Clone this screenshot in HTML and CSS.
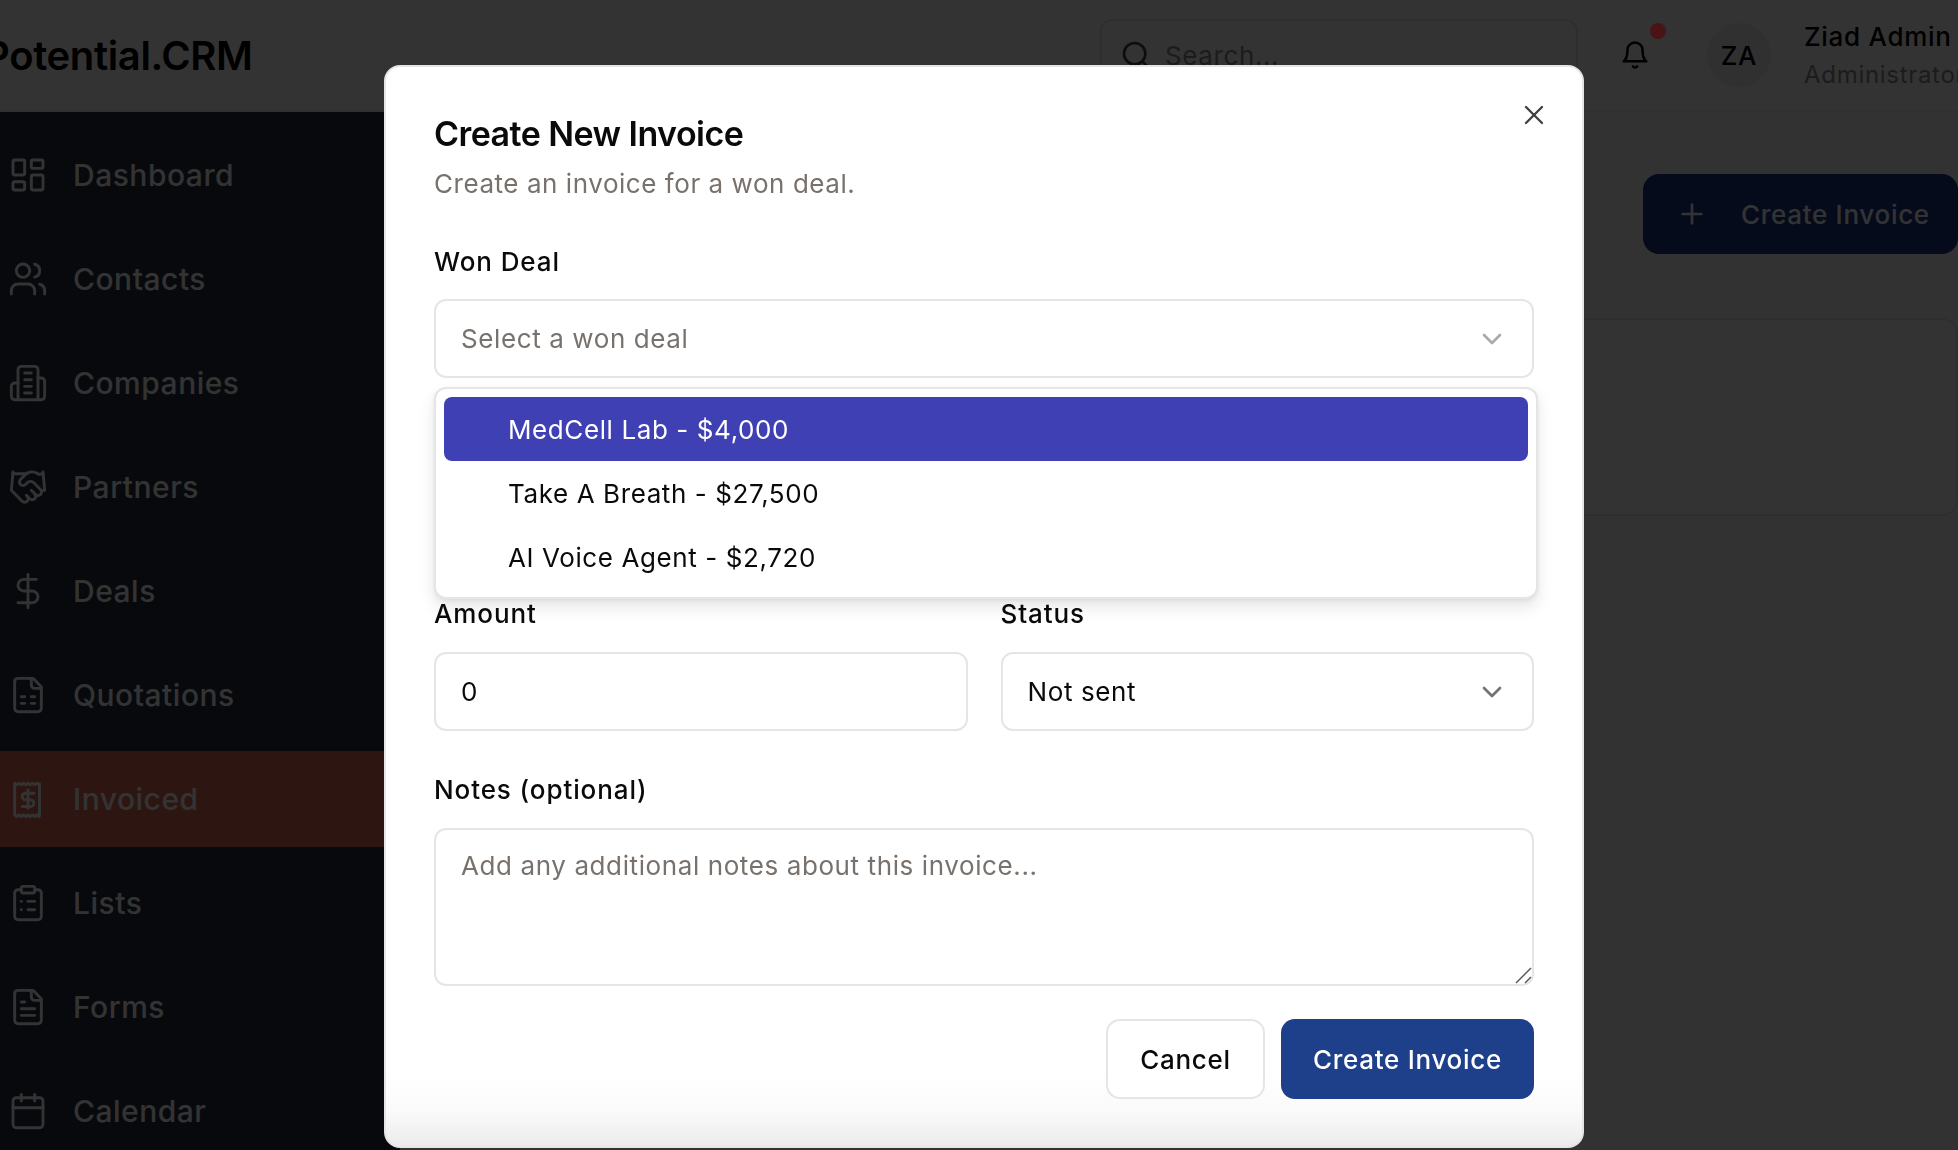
FILE: index.html
```html
<!DOCTYPE html>
<html lang="en">
<head>
  <meta charset="UTF-8" />
  <meta name="viewport" content="width=device-width, initial-scale=1" />
  <title>Potential.CRM - Invoiced</title>
  <link rel="stylesheet" href="styles.css">
</head>
<body>
  <header class="topbar">
    <div class="brand">Potential.CRM</div>
    <div class="topbar-right">
      <div class="search">
        <svg class="search-icon" viewBox="0 0 24 24"><circle cx="11" cy="11" r="8"/><path d="m21 21-4.3-4.3"/></svg>
        <span>Search...</span>
      </div>
      <div class="bell">
        <svg viewBox="0 0 24 24"><path d="M6 8a6 6 0 0 1 12 0c0 7 3 9 3 9H3s3-2 3-9"/><path d="M10.3 21a1.94 1.94 0 0 0 3.4 0"/></svg>
        <span class="bell-dot"></span>
      </div>
      <div class="avatar">ZA</div>
      <div class="user">
        <div class="user-name">Ziad Admin</div>
        <div class="user-role">Administrator</div>
      </div>
    </div>
  </header>

  <div class="layout">
    <nav class="sidebar">
      <a class="nav-item">
        <svg viewBox="0 0 24 24"><rect x="3" y="3" width="7" height="9" rx="1"/><rect x="14" y="3" width="7" height="5" rx="1"/><rect x="14" y="12" width="7" height="9" rx="1"/><rect x="3" y="16" width="7" height="5" rx="1"/></svg>
        Dashboard
      </a>
      <a class="nav-item">
        <svg viewBox="0 0 24 24"><path d="M16 21v-2a4 4 0 0 0-4-4H6a4 4 0 0 0-4 4v2"/><circle cx="9" cy="7" r="4"/><path d="M22 21v-2a4 4 0 0 0-3-3.87"/><path d="M16 3.13a4 4 0 0 1 0 7.75"/></svg>
        Contacts
      </a>
      <a class="nav-item">
        <svg viewBox="0 0 24 24"><path d="M6 22V4a2 2 0 0 1 2-2h8a2 2 0 0 1 2 2v18Z"/><path d="M6 12H4a2 2 0 0 0-2 2v6a2 2 0 0 0 2 2h2"/><path d="M18 9h2a2 2 0 0 1 2 2v9a2 2 0 0 1-2 2h-2"/><path d="M10 6h4"/><path d="M10 10h4"/><path d="M10 14h4"/><path d="M10 18h4"/></svg>
        Companies
      </a>
      <a class="nav-item">
        <svg viewBox="0 0 24 24"><path d="m11 17 2 2a1 1 0 1 0 3-3"/><path d="m14 14 2.5 2.5a1 1 0 1 0 3-3l-3.88-3.88a3 3 0 0 0-4.24 0l-.88.88a1 1 0 1 1-3-3l2.81-2.81a5.79 5.79 0 0 1 7.06-.87l.47.28a2 2 0 0 0 1.42.25L21 4"/><path d="m21 3 1 11h-2"/><path d="M3 3 2 14l6.5 6.5a1 1 0 1 0 3-3"/><path d="M3 4h8"/></svg>
        Partners
      </a>
      <a class="nav-item">
        <svg viewBox="0 0 24 24"><path d="M12 2v20"/><path d="M17 5H9.5a3.5 3.5 0 0 0 0 7h5a3.5 3.5 0 0 1 0 7H6"/></svg>
        Deals
      </a>
      <a class="nav-item">
        <svg viewBox="0 0 24 24"><path d="M15 2H6a2 2 0 0 0-2 2v16a2 2 0 0 0 2 2h12a2 2 0 0 0 2-2V7Z"/><path d="M14 2v4a2 2 0 0 0 2 2h4"/><path d="M8 13h2"/><path d="M14 13h2"/><path d="M8 17h2"/><path d="M14 17h2"/></svg>
        Quotations
      </a>
      <a class="nav-item active">
        <svg viewBox="0 0 24 24"><path d="M4 2.5l1.3 1 1.4-1 1.3 1 1.3-1 1.4 1 1.3-1 1.3 1 1.4-1 1.3 1 1.4-1 1.3 1 .2-.6v19l-.2.6-1.3-1-1.4 1-1.3-1-1.4 1-1.3-1-1.3 1-1.4-1-1.3 1-1.3-1-1.4 1L4 21.5Z"/><path d="M15.5 8.5h-5a2 2 0 0 0 0 4h3a2 2 0 0 1 0 4h-5"/><path d="M12 6.5v11"/></svg>
        Invoiced
      </a>
      <a class="nav-item">
        <svg viewBox="0 0 24 24"><rect x="8" y="2" width="8" height="4" rx="1"/><path d="M16 4h2a2 2 0 0 1 2 2v14a2 2 0 0 1-2 2H6a2 2 0 0 1-2-2V6a2 2 0 0 1 2-2h2"/><path d="M12 11h4"/><path d="M12 16h4"/><path d="M8 11h.01"/><path d="M8 16h.01"/></svg>
        Lists
      </a>
      <a class="nav-item">
        <svg viewBox="0 0 24 24"><path d="M15 2H6a2 2 0 0 0-2 2v16a2 2 0 0 0 2 2h12a2 2 0 0 0 2-2V7Z"/><path d="M14 2v4a2 2 0 0 0 2 2h4"/><path d="M10 9H8"/><path d="M16 13H8"/><path d="M16 17H8"/></svg>
        Forms
      </a>
      <a class="nav-item">
        <svg viewBox="0 0 24 24"><path d="M8 2v4"/><path d="M16 2v4"/><rect x="3" y="4" width="18" height="18" rx="2"/><path d="M3 10h18"/></svg>
        Calendar
      </a>
    </nav>

    <main class="content">
      <div class="content-head">
        <button class="btn-page">
          <svg viewBox="0 0 24 24"><path d="M5 12h14"/><path d="M12 5v14"/></svg>
          Create Invoice
        </button>
      </div>
      <div class="card"></div>
    </main>
  </div>

  <div class="overlay"></div>

  <section class="modal">
    <svg class="modal-close" viewBox="0 0 24 24"><path d="M18 6 6 18"/><path d="m6 6 12 12"/></svg>
    <h2 class="modal-title">Create New Invoice</h2>
    <p class="modal-sub">Create an invoice for a won deal.</p>

    <div class="field deal-field">
      <label class="field-label">Won Deal</label>
      <div class="select placeholder">
        Select a won deal
        <svg class="chevron faded" viewBox="0 0 24 24"><path d="m6 9 6 6 6-6"/></svg>
      </div>
      <ul class="dropdown">
        <li class="option selected">MedCell Lab - $4,000</li>
        <li class="option">Take A Breath - $27,500</li>
        <li class="option">AI Voice Agent - $2,720</li>
      </ul>
    </div>

    <div class="field-covered"></div>

    <div class="field-row">
      <div class="field">
        <label class="field-label">Amount</label>
        <input class="input" type="text" value="0" />
      </div>
      <div class="field">
        <label class="field-label">Status</label>
        <div class="select">
          Not sent
          <svg class="chevron" viewBox="0 0 24 24"><path d="m6 9 6 6 6-6"/></svg>
        </div>
      </div>
    </div>

    <div class="field">
      <label class="field-label">Notes (optional)</label>
      <textarea class="input notes" placeholder="Add any additional notes about this invoice..."></textarea>
      <svg class="resize-grip" viewBox="0 0 18 18"><path d="M2 17 17 2"/><path d="m11 17 6-6"/></svg>
    </div>

    <div class="modal-actions">
      <button class="btn btn-outline">Cancel</button>
      <button class="btn btn-primary">Create Invoice</button>
    </div>
  </section>
</body>
</html>
```

FILE: styles.css
```css
* { box-sizing: border-box; margin: 0; padding: 0; }
html, body { height: 100%; }
body {
  font-family: 'Inter', 'Liberation Sans', sans-serif;
  background: #fafafa;
  color: #0a0a0a;
  overflow: hidden;
}
svg {
  fill: none;
  stroke: currentColor;
  stroke-width: 2;
  stroke-linecap: round;
  stroke-linejoin: round;
}

/* page behind the dialog */
.topbar {
  height: 112px;
  display: flex;
  align-items: center;
  justify-content: space-between;
  background: #fff;
  border-bottom: 2px solid #f0f0f0;
}
.brand {
  margin-left: -16px;
  font-size: 40px;
  font-weight: 600;
  letter-spacing: -0.35px;
  color: #000;
}
.topbar-right { display: flex; align-items: center; }
.search {
  width: 478px;
  height: 72px;
  margin-right: 42px;
  padding-left: 18px;
  display: flex;
  align-items: center;
  gap: 13px;
  border: 2px solid #e5e5e5;
  border-radius: 12px;
  font-size: 26px;
  letter-spacing: 0.6px;
  color: #8a8a8f;
}
.search-icon { width: 32px; height: 32px; color: #404040; }
.bell { position: relative; width: 30px; height: 30px; margin-right: 57px; color: #000; }
.bell svg { display: block; width: 30px; height: 30px; }
.bell-dot {
  position: absolute;
  top: -17px;
  right: -16px;
  width: 16px;
  height: 16px;
  border-radius: 50%;
  background: #4a1416;
  z-index: 1;
}
.avatar {
  width: 64px;
  height: 64px;
  margin-right: 33px;
  display: flex;
  align-items: center;
  justify-content: center;
  border-radius: 50%;
  background: #f0f0f0;
  font-size: 26px;
  font-weight: 500;
  letter-spacing: 0.8px;
  color: #000;
}
.user { width: 154px; white-space: nowrap; }
.user-name { font-size: 26px; line-height: 37px; font-weight: 500; letter-spacing: 0.7px; color: #000; }
.user-role { margin-top: 2px; font-size: 24px; line-height: 36px; letter-spacing: 0.7px; color: #8a8a8f; }

.layout { display: flex; height: calc(100vh - 112px); }
.sidebar {
  width: 400px;
  padding-top: 15px;
  display: flex;
  flex-direction: column;
  gap: 8px;
  background: #242d40;
  flex-shrink: 0;
}
.nav-item {
  height: 96px;
  padding-left: 8px;
  display: flex;
  align-items: center;
  gap: 25px;
  font-size: 30px;
  font-weight: 500;
  letter-spacing: 0.5px;
  color: #fff;
  flex-shrink: 0;
}
.nav-item svg { width: 40px; height: 40px; stroke-width: 1.75; }
.nav-item.active { background: #e16b56; }

.content { flex: 1; padding-top: 62px; }
.content-head { height: 144px; display: flex; justify-content: flex-end; }
.btn-page {
  width: 315px;
  height: 80px;
  padding-left: 33px;
  display: flex;
  align-items: center;
  gap: 33px;
  border: none;
  border-radius: 16px;
  background: #1e3a8a;
  color: #fff;
  font-family: inherit;
  font-size: 26px;
  font-weight: 500;
  letter-spacing: 0.7px;
}
.btn-page svg { width: 32px; height: 32px; }
.card {
  height: 198px;
  border: 2px solid #e5e5e5;
  border-radius: 16px;
  background: #fff;
}

.overlay { position: fixed; inset: 0; background: rgba(0, 0, 0, 0.8); }

/* dialog */
.modal {
  position: fixed;
  top: 65px;
  left: 384px;
  width: 1200px;
  height: 1083px;
  padding: 47px 48px 48px;
  display: flex;
  flex-direction: column;
  border: 2px solid #e5e5e5;
  border-radius: 16px;
  background: linear-gradient(#fff 0, #fff 1005px, #fafafa 1045px, #ebebeb 100%);
  z-index: 2;
}
.modal-close {
  position: absolute;
  top: 32px;
  right: 32px;
  width: 32px;
  height: 32px;
  stroke-width: 1.75;
  color: #404040;
}
.modal-title {
  font-size: 34px;
  line-height: 40px;
  font-weight: 600;
  letter-spacing: -0.55px;
}
.modal-sub {
  margin-top: 10px;
  font-size: 26px;
  line-height: 40px;
  letter-spacing: 0.55px;
  color: #78716c;
}
.field { position: relative; display: flex; flex-direction: column; flex: 1; }
.deal-field { flex: none; margin-top: 38px; }
.field-covered { height: 216px; flex-shrink: 0; }
.field-row { display: flex; gap: 33px; }
.field-row + .field { margin-top: 39px; }
.field-label {
  height: 40px;
  margin-bottom: 18px;
  font-size: 26px;
  line-height: 40px;
  font-weight: 500;
  letter-spacing: 0.9px;
}
.deal-field .field-label { margin-bottom: 17px; }
.select, .input {
  height: 79px;
  padding: 0 25px;
  display: flex;
  align-items: center;
  justify-content: space-between;
  width: 100%;
  border: 2px solid #e5e5e5;
  border-radius: 12px;
  background: #fff;
  color: #0a0a0a;
  font-family: inherit;
  font-size: 26px;
  letter-spacing: 0.6px;
  outline: none;
}
.select.placeholder { color: #78716c; }
.input::placeholder { color: #78716c; opacity: 1; }
.notes { display: block; height: 158px; padding-top: 18px; line-height: 36px; resize: none; }
.resize-grip {
  position: absolute;
  right: 2px;
  bottom: 2px;
  width: 18px;
  height: 18px;
  stroke-width: 1.5;
  stroke-linecap: butt;
  color: #555;
}
.chevron { width: 32px; height: 32px; margin-right: -1px; color: #737373; }
.chevron.faded { opacity: 0.6; }
.dropdown {
  position: absolute;
  top: 145px;
  left: 0;
  width: 1104px;
  padding: 8px;
  list-style: none;
  border: 2px solid #e5e5e5;
  border-radius: 12px;
  background: #fff;
  box-shadow: 0 8px 16px rgba(0, 0, 0, 0.1), 0 2px 4px rgba(0, 0, 0, 0.06);
  z-index: 2;
}
.option {
  height: 64px;
  padding-left: 64px;
  display: flex;
  align-items: center;
  border-radius: 8px;
  font-size: 26px;
  letter-spacing: 0.6px;
}
.option.selected { background: #4040b5; color: #fff; }
.modal-actions {
  margin-top: 33px;
  display: flex;
  justify-content: flex-end;
  gap: 16px;
}
.btn {
  height: 80px;
  border-radius: 14px;
  font-family: inherit;
  font-size: 26px;
  font-weight: 500;
  letter-spacing: 0.7px;
}
.btn-outline { width: 159px; border: 2px solid #e5e5e5; background: #fff; color: #0a0a0a; }
.btn-primary { width: 253px; border: none; background: #1e3f8a; color: #fff; }
```
